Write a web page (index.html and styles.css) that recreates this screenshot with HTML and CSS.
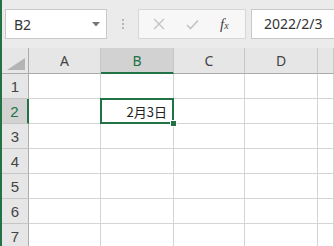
FILE: index.html
```html
<!doctype html>
<html lang="ja">
<head>
    <meta charset="UTF-8">
    <title>Sheet</title>
    <link rel="stylesheet" href="styles.css">
</head>
<body>
<div class="app">
    <div class="toolbar">
        <div class="namebox">
            <span class="ref">B2</span>
            <svg class="drop" width="8" height="5" viewBox="0 0 8 5"><polygon points="0,0 8,0 4,4.5" fill="#777"/></svg>
        </div>
        <div class="grip">
            <i></i><i></i><i></i>
        </div>
        <div class="fbuttons">
            <svg width="12" height="12" viewBox="0 0 12 12"><path d="M1 1 L11 11 M11 1 L1 11" stroke="#c4c4c4" stroke-width="1.4" fill="none"/></svg>
            <svg width="13" height="11" viewBox="0 0 13 11"><path d="M1 6 L4.5 9.5 L12 1.5" stroke="#c4c4c4" stroke-width="1.6" fill="none"/></svg>
            <span class="fx">f<small>x</small></span>
        </div>
        <div class="formula">2022/2/3</div>
    </div>

    <div class="sheet">
        <div class="hd corner">
            <svg width="18" height="12" viewBox="0 0 18 12"><polygon points="18,0 18,12 0,12" fill="#b4b4b4"/></svg>
        </div>
        <div class="hd col">A</div>
        <div class="hd col sel">B</div>
        <div class="hd col">C</div>
        <div class="hd col">D</div>
        <div class="hd col"></div>

        <div class="hd row">1</div>
        <div class="cell"></div><div class="cell"></div><div class="cell"></div><div class="cell"></div><div class="cell"></div>

        <div class="hd row sel">2</div>
        <div class="cell"></div><div class="cell active">2月3日</div><div class="cell"></div><div class="cell"></div><div class="cell"></div>

        <div class="hd row">3</div>
        <div class="cell"></div><div class="cell"></div><div class="cell"></div><div class="cell"></div><div class="cell"></div>

        <div class="hd row">4</div>
        <div class="cell"></div><div class="cell"></div><div class="cell"></div><div class="cell"></div><div class="cell"></div>

        <div class="hd row">5</div>
        <div class="cell"></div><div class="cell"></div><div class="cell"></div><div class="cell"></div><div class="cell"></div>

        <div class="hd row">6</div>
        <div class="cell"></div><div class="cell"></div><div class="cell"></div><div class="cell"></div><div class="cell"></div>

        <div class="hd row">7</div>
        <div class="cell"></div><div class="cell"></div><div class="cell"></div><div class="cell"></div><div class="cell"></div>
    </div>
</div>
</body>
</html>
```

FILE: styles.css
```css
body {
    margin: 0;
    width: 334px;
    height: 246px;
    overflow: hidden;
    background: #ffffff;
    font-family: "Noto Sans", "Liberation Sans", "Noto Sans CJK JP", sans-serif;
}

.app {
    border-left: 2px solid #217346;
    height: 246px;
}

.toolbar {
    height: 48px;
    background-color: #ebebeb;
    display: flex;
    align-items: flex-start;
    padding-top: 9px;
    box-sizing: border-box;
}

.namebox {
    margin-left: 3px;
    width: 102px;
    height: 30px;
    box-sizing: border-box;
    border: 1px solid #c8c8c8;
    background: #ffffff;
    display: flex;
    align-items: center;
    justify-content: space-between;
    padding: 0 6px 0 8px;
}

.namebox .ref {
    font-size: 14px;
    color: #333333;
}

.grip {
    width: 31px;
    height: 30px;
    display: flex;
    flex-direction: column;
    align-items: center;
    justify-content: center;
    gap: 2px;
}

.grip i {
    width: 2px;
    height: 2px;
    background: #b5b5b5;
}

.fbuttons {
    width: 108px;
    height: 30px;
    box-sizing: border-box;
    border: 1px solid #d6d6d6;
    background: #f7f7f7;
    display: flex;
    align-items: center;
    justify-content: space-around;
    padding: 0 6px 0 4px;
}

.fx {
    font-family: "Liberation Serif", serif;
    font-style: italic;
    font-size: 15px;
    color: #444444;
}

.fx small {
    font-size: 10px;
}

.formula {
    margin-left: 5px;
    flex: 1;
    height: 30px;
    box-sizing: border-box;
    border: 1px solid #c8c8c8;
    border-right: none;
    background: #ffffff;
    font-size: 14px;
    color: #333333;
    padding-left: 12px;
    line-height: 28px;
}

.sheet {
    display: grid;
    grid-template-columns: 27px 72px 73px 71px 73px 1fr;
    grid-template-rows: 26px repeat(7, 25px);
}

.hd {
    background-color: #e6e6e6;
    color: #444444;
    box-sizing: border-box;
    display: flex;
    align-items: center;
    justify-content: center;
    font-size: 14px;
}

.hd.col {
    border-right: 1px solid #c6c6c6;
    border-bottom: 1px solid #ababab;
}

.hd.row {
    border-right: 1px solid #ababab;
    border-bottom: 1px solid #c6c6c6;
    font-family: "Liberation Sans", "Noto Sans CJK JP", sans-serif;
    font-size: 15px;
    color: #444444;
}

.hd.corner {
    border-right: 1px solid #ababab;
    border-bottom: 1px solid #ababab;
    align-items: flex-end;
    justify-content: flex-end;
    padding: 0 3px 3px 0;
}

.hd.col.sel {
    background-color: #d2d2d2;
    border-bottom: 2px solid #217346;
    color: #217346;
}

.hd.row.sel {
    background-color: #d2d2d2;
    border-right: 2px solid #217346;
    color: #217346;
}

.cell {
    box-sizing: border-box;
    border-right: 1px solid #d4d4d4;
    border-bottom: 1px solid #d4d4d4;
    font-family: "Noto Sans CJK JP", sans-serif;
    font-size: 13px;
    color: #222222;
    display: flex;
    align-items: center;
    justify-content: flex-end;
    padding-right: 6px;
}

.cell.active {
    position: relative;
}

.cell.active::before {
    content: "";
    position: absolute;
    left: -1px;
    top: -1px;
    right: -1px;
    bottom: -1px;
    border: 2px solid #217346;
}

.cell.active::after {
    content: "";
    position: absolute;
    right: -4px;
    bottom: -4px;
    width: 5px;
    height: 5px;
    background: #217346;
    border: 1px solid #ffffff;
}
```
